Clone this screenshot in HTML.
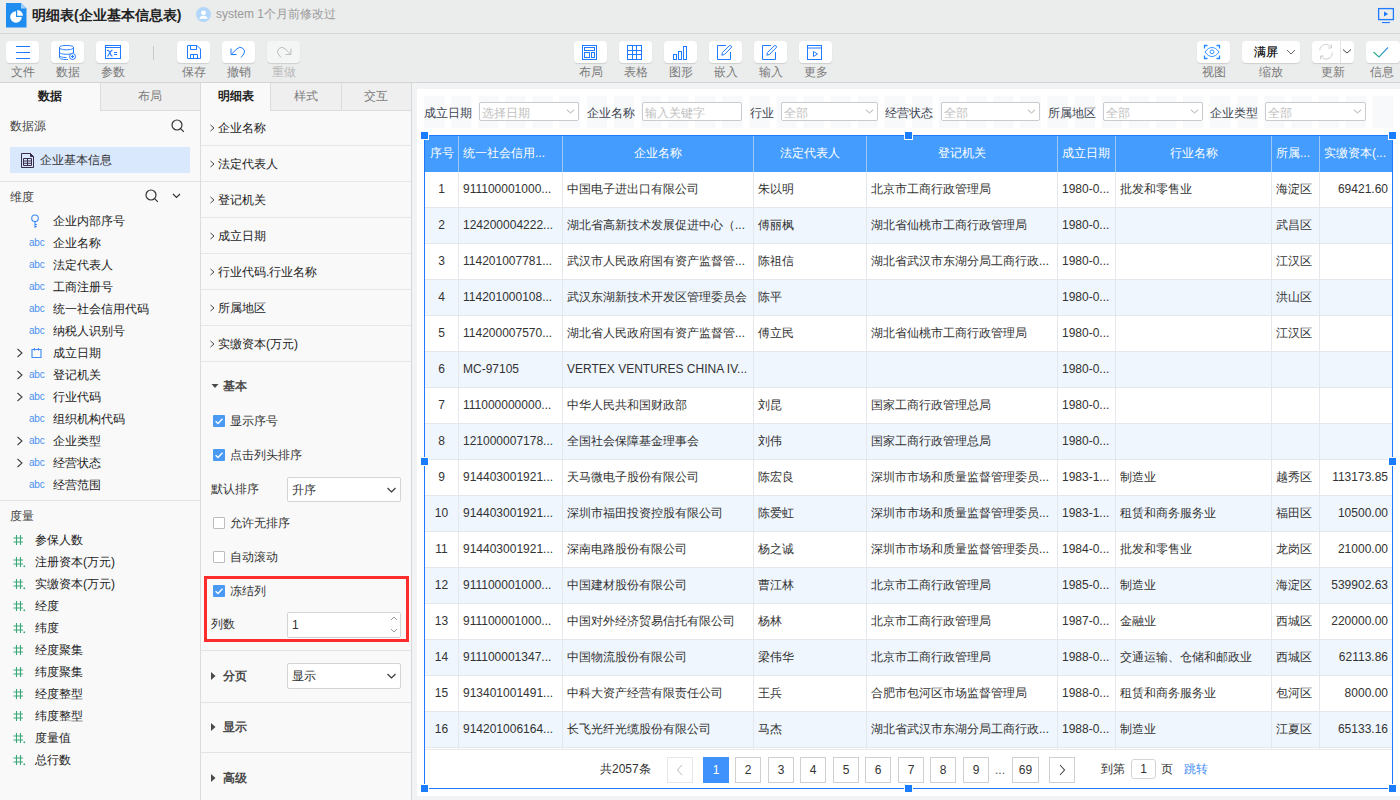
<!DOCTYPE html><html><head><meta charset="utf-8"><style>
*{box-sizing:border-box;margin:0;padding:0}
html,body{width:1400px;height:800px;overflow:hidden}
body{position:relative;font-family:"Liberation Sans",sans-serif;font-size:12px;color:#333;background:#ebecec}
.ab{position:absolute}
.t{position:absolute;white-space:nowrap;line-height:14px}
#hdr{left:0;top:0;width:1400px;height:34px;background:#ebecec;border-bottom:1px solid #d6d7d7}
#tb{left:0;top:34px;width:1400px;height:49px;background:#ebecec;border-bottom:1px solid #d3d4d4}
.btn{position:absolute;top:41px;width:33px;height:22px;background:#fff;border-radius:4px;box-shadow:0 1px 1px rgba(0,0,0,.13)}
.btn svg{position:absolute;left:0;top:0;overflow:visible}
.lbl{position:absolute;top:65px;width:60px;text-align:center;color:#7a7a7a;font-size:12px;line-height:14px}
#p1{left:0;top:83px;width:201px;height:717px;background:#f9f9f9;border-right:1px solid #dcdcdc}
#p2{left:201px;top:83px;width:211px;height:717px;background:#f9f9f9;border-right:1px solid #d8d8d8}
#main{left:412px;top:83px;width:988px;height:717px;background:#f2f3f4}
#card{left:417px;top:89px;width:983px;height:707px;background:#fff}
</style></head><body>
<div id="hdr" class="ab"></div>
<svg class="ab" style="left:6px;top:3px" width="21" height="25" viewBox="0 0 21 25">
<path d="M0 0H15L20.5 5.5V24.5H0Z" fill="#1f8cf0"/><path d="M15 0L20.5 5.5H15Z" fill="#9fd0ff"/>
<path d="M10 8.2A5.8 5.8 0 1 0 15.8 14H10Z" fill="#fff"/><path d="M11.2 7V12.8H17A5.8 5.8 0 0 0 11.2 7Z" fill="#fff"/>
</svg>
<div class="t" style="left:32px;top:7px;font-size:14px;font-weight:bold;color:#222;line-height:16px">明细表(企业基本信息表)</div>
<svg class="ab" style="left:196px;top:7px" width="15" height="15" viewBox="0 0 16 16">
<circle cx="8" cy="8" r="8" fill="#b3d7f8"/><circle cx="8" cy="6.2" r="2.6" fill="#fff"/><path d="M3.6 12.4C4.2 10 6 9.3 8 9.3S11.8 10 12.4 12.4Z" fill="#fff"/></svg>
<div class="t" style="left:216px;top:7px;color:#9a9a9a">system 1个月前修改过</div>
<svg class="ab" style="left:1377px;top:7px" width="18" height="17" viewBox="0 0 18 17">
<rect x="1.6" y="1.6" width="14.8" height="11" fill="none" stroke="#1f7bff" stroke-width="1.3"/>
<path d="M7 4.6L11.2 7.1L7 9.6Z" fill="#1f7bff"/><rect x="5" y="15" width="8" height="1.1" fill="#1f7bff"/></svg>
<div id="tb" class="ab"></div>
<div class="btn" style="left:6px;width:33px;background:#fff"><svg width="33" height="22" viewBox="0 0 33 22" fill="none" stroke="#1f7bff" stroke-width="1"><path d="M10 5.5H24M10 11.5H24M10 17.5H24"/></svg></div>
<div class="lbl" style="left:-7.5px;color:#7a7a7a">文件</div>
<div class="btn" style="left:51px;width:33px;background:#fff"><svg width="33" height="22" viewBox="0 0 33 22" fill="none" stroke="#1f7bff" stroke-width="1"><path d="M8.5 6.5C8.5 5 11.6 4.5 15.5 4.5S22.5 5 22.5 6.5V12"/><path d="M8.5 6.5V16.5C8.5 18 11.6 18.5 15.5 18.5H17"/><path d="M8.5 6.5C8.5 8 11.6 8.8 15.5 8.8S22.5 8 22.5 6.5"/><path d="M8.5 11C8.5 12.5 11.6 13.3 15.5 13.3S22.5 12.5 22.5 11"/><path d="M8.5 14.5C8.5 16 11.6 16.5 15.5 16.5"/><circle cx="21.5" cy="15.5" r="3" fill="#fff"/><path d="M21.5 14V17M20 15.5H23"/></svg></div>
<div class="lbl" style="left:37.5px;color:#7a7a7a">数据</div>
<div class="btn" style="left:96px;width:33px;background:#fff"><svg width="33" height="22" viewBox="0 0 33 22" fill="none" stroke="#1f7bff" stroke-width="1"><rect x="9.5" y="4.5" width="15" height="13"/><path d="M9.5 6.5H24.5"/><path d="M11 9.5C12.5 8.8 13 9.5 14 12S15.5 15.5 16.5 14.8M16.5 9C15 9.5 13 13 11.5 15.5" stroke-width="1.1"/><path d="M18 11.5H21M18 13.5H21"/></svg></div>
<div class="lbl" style="left:82.5px;color:#7a7a7a">参数</div>
<div class="ab" style="left:153px;top:46px;width:1px;height:14px;background:#c9c9c9"></div>
<div class="btn" style="left:177px;width:33px;background:#fff"><svg width="33" height="22" viewBox="0 0 33 22" fill="none" stroke="#1f7bff" stroke-width="1"><path d="M10.5 4.5H20L23.5 8V17.5H10.5Z"/><path d="M13.5 4.5V8.5H19.5V4.5"/><path d="M13.5 17.5V13.5H20.5V17.5M16.5 13.5V17.5"/></svg></div>
<div class="lbl" style="left:163.5px;color:#7a7a7a">保存</div>
<div class="btn" style="left:222px;width:33px;background:#fff"><svg width="33" height="22" viewBox="0 0 33 22" fill="none" stroke="#1f7bff" stroke-width="1"><path d="M9.5 13L15 7.8A4.3 4.3 0 0 1 21.8 13L19 16.5"/><path d="M9 7.5V13.5H14.5"/></svg></div>
<div class="lbl" style="left:208.5px;color:#7a7a7a">撤销</div>
<div class="btn" style="left:267px;width:33px;background:#f4f5f5"><svg width="33" height="22" viewBox="0 0 33 22" fill="none" stroke="#1f7bff" stroke-width="1"><path d="M23.5 13L18 7.8A4.3 4.3 0 0 0 11.2 13L14 16.5" stroke="#bdbdbd"/><path d="M24 7.5V13.5H18.5" stroke="#bdbdbd"/></svg></div>
<div class="lbl" style="left:253.5px;color:#b9b9b9">重做</div>
<div class="btn" style="left:574px;width:33px;background:#fff"><svg width="33" height="22" viewBox="0 0 33 22" fill="none" stroke="#1f7bff" stroke-width="1"><rect x="8.5" y="4.5" width="14" height="14"/><rect x="10.5" y="6.5" width="10" height="3"/><rect x="10.5" y="11.5" width="5" height="5"/><rect x="17.5" y="11.5" width="3" height="5"/></svg></div>
<div class="lbl" style="left:560.5px;color:#7a7a7a">布局</div>
<div class="btn" style="left:619px;width:33px;background:#fff"><svg width="33" height="22" viewBox="0 0 33 22" fill="none" stroke="#1f7bff" stroke-width="1"><rect x="8.5" y="4.5" width="14" height="14"/><path d="M8.5 9.5H22.5M8.5 13.5H22.5M13.5 4.5V18.5M17.5 4.5V18.5"/></svg></div>
<div class="lbl" style="left:605.5px;color:#7a7a7a">表格</div>
<div class="btn" style="left:664px;width:33px;background:#fff"><svg width="33" height="22" viewBox="0 0 33 22" fill="none" stroke="#1f7bff" stroke-width="1"><rect x="9.5" y="13.5" width="3" height="5"/><rect x="14.5" y="10.5" width="3" height="8"/><rect x="19.5" y="5.5" width="3" height="13"/></svg></div>
<div class="lbl" style="left:650.5px;color:#7a7a7a">图形</div>
<div class="btn" style="left:709px;width:33px;background:#fff"><svg width="33" height="22" viewBox="0 0 33 22" fill="none" stroke="#1f7bff" stroke-width="1"><path d="M17 4.5H8.5V18.5H21.5V11"/><path d="M12.8 14.2L13.5 11.6L20.2 4.9A1.3 1.3 0 0 1 22.1 6.8L15.4 13.5Z"/></svg></div>
<div class="lbl" style="left:695.5px;color:#7a7a7a">嵌入</div>
<div class="btn" style="left:754px;width:33px;background:#fff"><svg width="33" height="22" viewBox="0 0 33 22" fill="none" stroke="#1f7bff" stroke-width="1"><path d="M17 4.5H8.5V18.5H21.5V11"/><path d="M12.8 14.2L13.5 11.6L20.2 4.9A1.3 1.3 0 0 1 22.1 6.8L15.4 13.5Z"/></svg></div>
<div class="lbl" style="left:740.5px;color:#7a7a7a">输入</div>
<div class="btn" style="left:799px;width:33px;background:#fff"><svg width="33" height="22" viewBox="0 0 33 22" fill="none" stroke="#1f7bff" stroke-width="1"><rect x="8.5" y="4.5" width="14" height="14"/><path d="M8.5 7H22.5"/><path d="M14.5 10.5L18.5 13L14.5 15.5Z"/></svg></div>
<div class="lbl" style="left:785.5px;color:#7a7a7a">更多</div>
<div class="btn" style="left:1197px;width:33px;background:#fff"><svg width="33" height="22" viewBox="0 0 33 22" fill="none" stroke="#1f7bff" stroke-width="1"><path d="M7.5 7.5V4.5H10.5M19.5 4.5H22.5V7.5M22.5 14.5V17.5H19.5M10.5 17.5H7.5V14.5" stroke="#2288ff" stroke-width="1.3"/><path d="M8 11C10 8 12.5 6.5 15 6.5S20 8 22 11C20 14 17.5 15.5 15 15.5S10 14 8 11Z" stroke="#3595ff"/><circle cx="15" cy="10.8" r="1.9" stroke="#3595ff"/></svg></div>
<div class="lbl" style="left:1183.5px;color:#7a7a7a">视图</div>
<div class="btn" style="left:1242px;width:58px"><div class="t" style="left:12px;top:4px;color:#000;font-size:12px;-webkit-text-stroke:0.2px #000">满屏</div><svg width="58" height="22" viewBox="0 0 58 22" fill="none" stroke="#666" stroke-width="1"><path d="M45 9L49 13L53 9"/></svg></div>
<div class="lbl" style="left:1241px">缩放</div>
<div class="btn" style="left:1312px;width:42px"><svg width="42" height="22" viewBox="0 0 42 22" fill="none" stroke="#cfcfcf" stroke-width="1"><path d="M7.8 9.5A6 6 0 0 1 19 6.5M20.2 11.5A6 6 0 0 1 9 15"/><path d="M19.5 3.5V7H16M8.5 18.5V15H12"/><path d="M28.5 0V22" stroke="#e3e3e3"/><path d="M31 8.5L35 12L39 8.5" stroke="#444"/></svg></div>
<div class="lbl" style="left:1303px">更新</div>
<div class="btn" style="left:1366px;width:34px"><svg width="34" height="22" viewBox="0 0 34 22" fill="none" stroke-width="1.1"><defs><linearGradient id="g1" x1="0" x2="1"><stop offset="0" stop-color="#20b27a"/><stop offset="1" stop-color="#3a8ee6"/></linearGradient></defs><path d="M7.5 11L13 16L22 6.5" stroke="url(#g1)"/></svg></div>
<div class="lbl" style="left:1352px">信息</div>
<div id="p1" class="ab"></div>
<div id="p2" class="ab"></div>
<div id="main" class="ab"></div>
<div id="card" class="ab"></div>
<div class="ab" style="left:100px;top:83px;width:100px;height:28px;background:#efefef;border-left:1px solid #dcdcdc;border-bottom:1px solid #dcdcdc"></div>
<div class="t" style="left:38px;top:89px;font-weight:bold;color:#222">数据</div>
<div class="t" style="left:138px;top:89px;color:#7c7c7c">布局</div>
<div class="t" style="left:10px;top:119px;color:#444">数据源</div>
<svg class="ab" style="left:171px;top:119px" width="14" height="14" viewBox="0 0 14 14" fill="none" stroke="#333" stroke-width="1.2"><circle cx="6" cy="6" r="5"/><path d="M9.6 9.6L12.8 12.8"/></svg>
<div class="ab" style="left:10px;top:147px;width:180px;height:26px;background:#d9e8fc"></div>
<svg class="ab" style="left:21px;top:153px" width="14" height="16" viewBox="0 0 14 16" fill="none" stroke="#3b2d4d" stroke-width="1"><path d="M0.5 0.5H9.5L12.5 3.5V14.5H0.5Z"/><path d="M9.5 0.5L12.5 3.5H9.5Z" fill="#3b2d4d"/><path d="M2.5 5.5H10.5V12.5H2.5ZM2.5 8H10.5M2.5 10.3H10.5M6.5 5.5V12.5"/></svg>
<div class="t" style="left:40px;top:153px;color:#333">企业基本信息</div>
<div class="ab" style="left:0;top:181px;width:200px;height:1px;background:#e3e3e3"></div>
<div class="t" style="left:10px;top:190px;color:#444">维度</div>
<svg class="ab" style="left:145px;top:189px" width="14" height="14" viewBox="0 0 14 14" fill="none" stroke="#333" stroke-width="1.2"><circle cx="6" cy="6" r="5"/><path d="M9.6 9.6L12.8 12.8"/></svg>
<svg class="ab" style="left:171px;top:192px" width="12" height="8" viewBox="0 0 12 8" fill="none" stroke="#333" stroke-width="1.2"><path d="M2 2L5.5 5.5L9 2"/></svg>
<svg class="ab" style="left:30px;top:213.5px" width="10" height="15" viewBox="0 0 10 15" fill="none" stroke="#3d8cf5" stroke-width="1.1"><circle cx="5" cy="4.3" r="3.3"/><path d="M5 7.6V14M5 10.5H7M5 12.5H6.8"/></svg>
<div class="t" style="left:53px;top:213.5px;color:#222">企业内部序号</div>
<div class="t" style="left:29px;top:235.5px;font-size:10px;color:#4a90f0;letter-spacing:-0.2px">abc</div>
<div class="t" style="left:53px;top:235.5px;color:#222">企业名称</div>
<div class="t" style="left:29px;top:257.5px;font-size:10px;color:#4a90f0;letter-spacing:-0.2px">abc</div>
<div class="t" style="left:53px;top:257.5px;color:#222">法定代表人</div>
<div class="t" style="left:29px;top:279.5px;font-size:10px;color:#4a90f0;letter-spacing:-0.2px">abc</div>
<div class="t" style="left:53px;top:279.5px;color:#222">工商注册号</div>
<div class="t" style="left:29px;top:301.5px;font-size:10px;color:#4a90f0;letter-spacing:-0.2px">abc</div>
<div class="t" style="left:53px;top:301.5px;color:#222">统一社会信用代码</div>
<div class="t" style="left:29px;top:323.5px;font-size:10px;color:#4a90f0;letter-spacing:-0.2px">abc</div>
<div class="t" style="left:53px;top:323.5px;color:#222">纳税人识别号</div>
<svg class="ab" style="left:16px;top:347.5px" width="8" height="10" viewBox="0 0 8 10" fill="none" stroke="#444" stroke-width="1.1"><path d="M1.5 1L6 5L1.5 9"/></svg>
<svg class="ab" style="left:31px;top:346.5px" width="11" height="12" viewBox="0 0 11 12" fill="none" stroke="#3d8cf5" stroke-width="1.1"><path d="M1 2.5H10V10.5H1Z"/><path d="M3.5 1V3.5M7.5 1V3.5"/></svg>
<div class="t" style="left:53px;top:345.5px;color:#222">成立日期</div>
<svg class="ab" style="left:16px;top:369.5px" width="8" height="10" viewBox="0 0 8 10" fill="none" stroke="#444" stroke-width="1.1"><path d="M1.5 1L6 5L1.5 9"/></svg>
<div class="t" style="left:29px;top:367.5px;font-size:10px;color:#4a90f0;letter-spacing:-0.2px">abc</div>
<div class="t" style="left:53px;top:367.5px;color:#222">登记机关</div>
<svg class="ab" style="left:16px;top:391.5px" width="8" height="10" viewBox="0 0 8 10" fill="none" stroke="#444" stroke-width="1.1"><path d="M1.5 1L6 5L1.5 9"/></svg>
<div class="t" style="left:29px;top:389.5px;font-size:10px;color:#4a90f0;letter-spacing:-0.2px">abc</div>
<div class="t" style="left:53px;top:389.5px;color:#222">行业代码</div>
<div class="t" style="left:29px;top:411.5px;font-size:10px;color:#4a90f0;letter-spacing:-0.2px">abc</div>
<div class="t" style="left:53px;top:411.5px;color:#222">组织机构代码</div>
<svg class="ab" style="left:16px;top:435.5px" width="8" height="10" viewBox="0 0 8 10" fill="none" stroke="#444" stroke-width="1.1"><path d="M1.5 1L6 5L1.5 9"/></svg>
<div class="t" style="left:29px;top:433.5px;font-size:10px;color:#4a90f0;letter-spacing:-0.2px">abc</div>
<div class="t" style="left:53px;top:433.5px;color:#222">企业类型</div>
<svg class="ab" style="left:16px;top:457.5px" width="8" height="10" viewBox="0 0 8 10" fill="none" stroke="#444" stroke-width="1.1"><path d="M1.5 1L6 5L1.5 9"/></svg>
<div class="t" style="left:29px;top:455.5px;font-size:10px;color:#4a90f0;letter-spacing:-0.2px">abc</div>
<div class="t" style="left:53px;top:455.5px;color:#222">经营状态</div>
<div class="t" style="left:29px;top:477.5px;font-size:10px;color:#4a90f0;letter-spacing:-0.2px">abc</div>
<div class="t" style="left:53px;top:477.5px;color:#222">经营范围</div>
<div class="ab" style="left:0;top:500px;width:200px;height:1px;background:#e3e3e3"></div>
<div class="t" style="left:10px;top:509px;color:#444">度量</div>
<svg class="ab" style="left:12px;top:534px" width="14" height="12" viewBox="0 0 14 12" fill="none" stroke="#3aa876" stroke-width="1.1"><path d="M4.5 1V11M8.5 1V11M1.5 4H11M1.5 8H11"/></svg>
<div class="t" style="left:35px;top:533px;color:#222">参保人数</div>
<svg class="ab" style="left:12px;top:556px" width="14" height="12" viewBox="0 0 14 12" fill="none" stroke="#3aa876" stroke-width="1.1"><path d="M4.5 1V11M8.5 1V11M1.5 4H11M1.5 8H11"/><rect x="11.5" y="9.5" width="1.6" height="1.6" fill="#3aa876" stroke="none"/></svg>
<div class="t" style="left:35px;top:555px;color:#222">注册资本(万元)</div>
<svg class="ab" style="left:12px;top:578px" width="14" height="12" viewBox="0 0 14 12" fill="none" stroke="#3aa876" stroke-width="1.1"><path d="M4.5 1V11M8.5 1V11M1.5 4H11M1.5 8H11"/><rect x="11.5" y="9.5" width="1.6" height="1.6" fill="#3aa876" stroke="none"/></svg>
<div class="t" style="left:35px;top:577px;color:#222">实缴资本(万元)</div>
<svg class="ab" style="left:12px;top:600px" width="14" height="12" viewBox="0 0 14 12" fill="none" stroke="#3aa876" stroke-width="1.1"><path d="M4.5 1V11M8.5 1V11M1.5 4H11M1.5 8H11"/><rect x="11.5" y="9.5" width="1.6" height="1.6" fill="#3aa876" stroke="none"/></svg>
<div class="t" style="left:35px;top:599px;color:#222">经度</div>
<svg class="ab" style="left:12px;top:622px" width="14" height="12" viewBox="0 0 14 12" fill="none" stroke="#3aa876" stroke-width="1.1"><path d="M4.5 1V11M8.5 1V11M1.5 4H11M1.5 8H11"/><rect x="11.5" y="9.5" width="1.6" height="1.6" fill="#3aa876" stroke="none"/></svg>
<div class="t" style="left:35px;top:621px;color:#222">纬度</div>
<svg class="ab" style="left:12px;top:644px" width="14" height="12" viewBox="0 0 14 12" fill="none" stroke="#3aa876" stroke-width="1.1"><path d="M4.5 1V11M8.5 1V11M1.5 4H11M1.5 8H11"/></svg>
<div class="t" style="left:35px;top:643px;color:#222">经度聚集</div>
<svg class="ab" style="left:12px;top:666px" width="14" height="12" viewBox="0 0 14 12" fill="none" stroke="#3aa876" stroke-width="1.1"><path d="M4.5 1V11M8.5 1V11M1.5 4H11M1.5 8H11"/></svg>
<div class="t" style="left:35px;top:665px;color:#222">纬度聚集</div>
<svg class="ab" style="left:12px;top:688px" width="14" height="12" viewBox="0 0 14 12" fill="none" stroke="#3aa876" stroke-width="1.1"><path d="M4.5 1V11M8.5 1V11M1.5 4H11M1.5 8H11"/></svg>
<div class="t" style="left:35px;top:687px;color:#222">经度整型</div>
<svg class="ab" style="left:12px;top:710px" width="14" height="12" viewBox="0 0 14 12" fill="none" stroke="#3aa876" stroke-width="1.1"><path d="M4.5 1V11M8.5 1V11M1.5 4H11M1.5 8H11"/></svg>
<div class="t" style="left:35px;top:709px;color:#222">纬度整型</div>
<svg class="ab" style="left:12px;top:732px" width="14" height="12" viewBox="0 0 14 12" fill="none" stroke="#3aa876" stroke-width="1.1"><path d="M4.5 1V11M8.5 1V11M1.5 4H11M1.5 8H11"/><rect x="11.5" y="9.5" width="1.6" height="1.6" fill="#3aa876" stroke="none"/></svg>
<div class="t" style="left:35px;top:731px;color:#222">度量值</div>
<svg class="ab" style="left:12px;top:754px" width="14" height="12" viewBox="0 0 14 12" fill="none" stroke="#3aa876" stroke-width="1.1"><path d="M4.5 1V11M8.5 1V11M1.5 4H11M1.5 8H11"/><rect x="11.5" y="9.5" width="1.6" height="1.6" fill="#3aa876" stroke="none"/></svg>
<div class="t" style="left:35px;top:753px;color:#222">总行数</div>
<div class="ab" style="left:270px;top:83px;width:141px;height:28px;background:#efefef;border-left:1px solid #dcdcdc;border-bottom:1px solid #dcdcdc"></div>
<div class="ab" style="left:341px;top:83px;width:1px;height:27px;background:#dcdcdc"></div>
<div class="t" style="left:218px;top:89px;font-weight:bold;color:#222">明细表</div>
<div class="t" style="left:294px;top:89px;color:#7c7c7c">样式</div>
<div class="t" style="left:364px;top:89px;color:#7c7c7c">交互</div>
<svg class="ab" style="left:209px;top:123px" width="7" height="10" viewBox="0 0 7 10" fill="none" stroke="#444" stroke-width="1"><path d="M1.5 2L5 5L1.5 8"/></svg>
<div class="t" style="left:218px;top:121px;color:#222">企业名称</div>
<div class="ab" style="left:201px;top:145px;width:210px;height:1px;background:#e6e6e6"></div>
<svg class="ab" style="left:209px;top:159px" width="7" height="10" viewBox="0 0 7 10" fill="none" stroke="#444" stroke-width="1"><path d="M1.5 2L5 5L1.5 8"/></svg>
<div class="t" style="left:218px;top:157px;color:#222">法定代表人</div>
<div class="ab" style="left:201px;top:181px;width:210px;height:1px;background:#e6e6e6"></div>
<svg class="ab" style="left:209px;top:195px" width="7" height="10" viewBox="0 0 7 10" fill="none" stroke="#444" stroke-width="1"><path d="M1.5 2L5 5L1.5 8"/></svg>
<div class="t" style="left:218px;top:193px;color:#222">登记机关</div>
<div class="ab" style="left:201px;top:217px;width:210px;height:1px;background:#e6e6e6"></div>
<svg class="ab" style="left:209px;top:231px" width="7" height="10" viewBox="0 0 7 10" fill="none" stroke="#444" stroke-width="1"><path d="M1.5 2L5 5L1.5 8"/></svg>
<div class="t" style="left:218px;top:229px;color:#222">成立日期</div>
<div class="ab" style="left:201px;top:253px;width:210px;height:1px;background:#e6e6e6"></div>
<svg class="ab" style="left:209px;top:267px" width="7" height="10" viewBox="0 0 7 10" fill="none" stroke="#444" stroke-width="1"><path d="M1.5 2L5 5L1.5 8"/></svg>
<div class="t" style="left:218px;top:265px;color:#222">行业代码.行业名称</div>
<div class="ab" style="left:201px;top:289px;width:210px;height:1px;background:#e6e6e6"></div>
<svg class="ab" style="left:209px;top:303px" width="7" height="10" viewBox="0 0 7 10" fill="none" stroke="#444" stroke-width="1"><path d="M1.5 2L5 5L1.5 8"/></svg>
<div class="t" style="left:218px;top:301px;color:#222">所属地区</div>
<div class="ab" style="left:201px;top:325px;width:210px;height:1px;background:#e6e6e6"></div>
<svg class="ab" style="left:209px;top:339px" width="7" height="10" viewBox="0 0 7 10" fill="none" stroke="#444" stroke-width="1"><path d="M1.5 2L5 5L1.5 8"/></svg>
<div class="t" style="left:218px;top:337px;color:#222">实缴资本(万元)</div>
<div class="ab" style="left:201px;top:361px;width:210px;height:1px;background:#e6e6e6"></div>
<svg class="ab" style="left:211px;top:383px" width="8" height="6" viewBox="0 0 8 6"><path d="M0.5 1H7.5L4 5Z" fill="#4a4a4a"/></svg>
<div class="t" style="left:223px;top:379px;color:#4a4a4a;font-weight:bold">基本</div>
<svg class="ab" style="left:213px;top:415px" width="12" height="12" viewBox="0 0 12 12"><rect width="12" height="12" rx="1" fill="#4a9af4"/><path d="M2.6 6.2L5 8.5L9.5 3.8" fill="none" stroke="#fff" stroke-width="1.3"/></svg>
<div class="t" style="left:230px;top:414px;color:#333">显示序号</div>
<svg class="ab" style="left:213px;top:449px" width="12" height="12" viewBox="0 0 12 12"><rect width="12" height="12" rx="1" fill="#4a9af4"/><path d="M2.6 6.2L5 8.5L9.5 3.8" fill="none" stroke="#fff" stroke-width="1.3"/></svg>
<div class="t" style="left:230px;top:448px;color:#333">点击列头排序</div>
<div class="t" style="left:211px;top:482px;color:#333">默认排序</div>
<div class="ab" style="left:287px;top:477px;width:114px;height:25px;background:#fff;border:1px solid #d4d4d4;border-radius:2px"></div>
<div class="t" style="left:292px;top:482.5px;color:#333">升序</div>
<svg class="ab" style="left:386px;top:485.5px" width="12" height="8" viewBox="0 0 12 8" fill="none" stroke="#333" stroke-width="1.1"><path d="M1.5 2L5.5 6L9.5 2"/></svg>
<div class="ab" style="left:213px;top:517px;width:12px;height:12px;background:#fff;border:1px solid #bdbdbd;border-radius:1px"></div>
<div class="t" style="left:230px;top:516px;color:#333">允许无排序</div>
<div class="ab" style="left:213px;top:551px;width:12px;height:12px;background:#fff;border:1px solid #bdbdbd;border-radius:1px"></div>
<div class="t" style="left:230px;top:550px;color:#333">自动滚动</div>
<div class="ab" style="left:204px;top:576px;width:205px;height:66px;border:3px solid #fd2d2d"></div>
<svg class="ab" style="left:213px;top:585px" width="12" height="12" viewBox="0 0 12 12"><rect width="12" height="12" rx="1" fill="#4a9af4"/><path d="M2.6 6.2L5 8.5L9.5 3.8" fill="none" stroke="#fff" stroke-width="1.3"/></svg>
<div class="t" style="left:230px;top:584px;color:#333">冻结列</div>
<div class="t" style="left:211px;top:617px;color:#333">列数</div>
<div class="ab" style="left:287px;top:612px;width:114px;height:26px;background:#fff;border:1px solid #d4d4d4;border-radius:2px"></div>
<div class="t" style="left:292px;top:618px;color:#333">1</div>
<svg class="ab" style="left:389px;top:613px" width="10" height="22" viewBox="0 0 10 22" fill="none" stroke="#999" stroke-width="1"><path d="M2 7L5 4L8 7M2 16L5 19L8 16"/></svg>
<div class="ab" style="left:201px;top:650px;width:210px;height:1px;background:#e3e3e3"></div>
<svg class="ab" style="left:210px;top:671px" width="6" height="10" viewBox="0 0 6 10"><path d="M1 1V9L5.5 5Z" fill="#4a4a4a"/></svg>
<div class="t" style="left:223px;top:669px;color:#4a4a4a;font-weight:bold">分页</div>
<div class="ab" style="left:287px;top:663px;width:114px;height:26px;background:#fff;border:1px solid #d4d4d4;border-radius:2px"></div>
<div class="t" style="left:292px;top:669.0px;color:#333">显示</div>
<svg class="ab" style="left:386px;top:672.0px" width="12" height="8" viewBox="0 0 12 8" fill="none" stroke="#333" stroke-width="1.1"><path d="M1.5 2L5.5 6L9.5 2"/></svg>
<div class="ab" style="left:201px;top:702px;width:210px;height:1px;background:#e3e3e3"></div>
<svg class="ab" style="left:210px;top:722px" width="6" height="10" viewBox="0 0 6 10"><path d="M1 1V9L5.5 5Z" fill="#4a4a4a"/></svg>
<div class="t" style="left:223px;top:720px;color:#4a4a4a;font-weight:bold">显示</div>
<div class="ab" style="left:201px;top:752px;width:210px;height:1px;background:#e3e3e3"></div>
<svg class="ab" style="left:210px;top:773px" width="6" height="10" viewBox="0 0 6 10"><path d="M1 1V9L5.5 5Z" fill="#4a4a4a"/></svg>
<div class="t" style="left:223px;top:771px;color:#4a4a4a;font-weight:bold">高级</div>
<div class="ab" style="left:424px;top:96px;width:969px;height:32px;background:linear-gradient(90deg,#f8f9fb 0,#f8f9fb 20px,transparent 20px);background-size:27.114px 32px"></div>
<div class="t" style="left:424px;top:106px;color:#3d4450">成立日期</div>
<div class="ab" style="left:479px;top:102px;width:100px;height:19px;background:#fff;border:1px solid #c8cbd0;border-radius:2px"></div>
<div class="t" style="left:482px;top:106px;color:#c0c0c0">选择日期</div>
<svg class="ab" style="left:566px;top:109px" width="9" height="5" viewBox="0 0 9 5" fill="none" stroke="#a8a8a8" stroke-width="1"><path d="M1 0.8L4.5 4L8 0.8"/></svg>
<div class="t" style="left:587px;top:106px;color:#3d4450">企业名称</div>
<div class="ab" style="left:642px;top:102px;width:100px;height:19px;background:#fff;border:1px solid #c8cbd0;border-radius:2px"></div>
<div class="t" style="left:645px;top:106px;color:#c0c0c0">输入关键字</div>
<div class="t" style="left:750px;top:106px;color:#3d4450">行业</div>
<div class="ab" style="left:781px;top:102px;width:97px;height:19px;background:#fff;border:1px solid #c8cbd0;border-radius:2px"></div>
<div class="t" style="left:784px;top:106px;color:#c0c0c0">全部</div>
<svg class="ab" style="left:865px;top:109px" width="9" height="5" viewBox="0 0 9 5" fill="none" stroke="#a8a8a8" stroke-width="1"><path d="M1 0.8L4.5 4L8 0.8"/></svg>
<div class="t" style="left:885px;top:106px;color:#3d4450">经营状态</div>
<div class="ab" style="left:941px;top:102px;width:99px;height:19px;background:#fff;border:1px solid #c8cbd0;border-radius:2px"></div>
<div class="t" style="left:944px;top:106px;color:#c0c0c0">全部</div>
<svg class="ab" style="left:1027px;top:109px" width="9" height="5" viewBox="0 0 9 5" fill="none" stroke="#a8a8a8" stroke-width="1"><path d="M1 0.8L4.5 4L8 0.8"/></svg>
<div class="t" style="left:1048px;top:106px;color:#3d4450">所属地区</div>
<div class="ab" style="left:1103px;top:102px;width:100px;height:19px;background:#fff;border:1px solid #c8cbd0;border-radius:2px"></div>
<div class="t" style="left:1106px;top:106px;color:#c0c0c0">全部</div>
<svg class="ab" style="left:1190px;top:109px" width="9" height="5" viewBox="0 0 9 5" fill="none" stroke="#a8a8a8" stroke-width="1"><path d="M1 0.8L4.5 4L8 0.8"/></svg>
<div class="t" style="left:1210px;top:106px;color:#3d4450">企业类型</div>
<div class="ab" style="left:1265px;top:102px;width:101px;height:19px;background:#fff;border:1px solid #c8cbd0;border-radius:2px"></div>
<div class="t" style="left:1268px;top:106px;color:#c0c0c0">全部</div>
<svg class="ab" style="left:1353px;top:109px" width="9" height="5" viewBox="0 0 9 5" fill="none" stroke="#a8a8a8" stroke-width="1"><path d="M1 0.8L4.5 4L8 0.8"/></svg>
<div class="ab" style="left:425px;top:136px;width:967px;height:36px;background:#439cfe"></div>
<div class="ab" style="left:458px;top:136px;width:1px;height:36px;background:#9cc8f8"></div>
<div class="ab" style="left:562px;top:136px;width:1px;height:36px;background:#9cc8f8"></div>
<div class="ab" style="left:753px;top:136px;width:1px;height:36px;background:#9cc8f8"></div>
<div class="ab" style="left:866px;top:136px;width:1px;height:36px;background:#9cc8f8"></div>
<div class="ab" style="left:1057px;top:136px;width:1px;height:36px;background:#9cc8f8"></div>
<div class="ab" style="left:1115px;top:136px;width:1px;height:36px;background:#9cc8f8"></div>
<div class="ab" style="left:1271px;top:136px;width:1px;height:36px;background:#9cc8f8"></div>
<div class="ab" style="left:1319px;top:136px;width:1px;height:36px;background:#9cc8f8"></div>
<div class="t" style="left:425px;top:146px;width:33px;text-align:center;color:#fff">序号</div>
<div class="t" style="left:463px;top:146px;color:#fff">统一社会信用...</div>
<div class="t" style="left:563px;top:146px;width:190px;text-align:center;color:#fff">企业名称</div>
<div class="t" style="left:754px;top:146px;width:112px;text-align:center;color:#fff">法定代表人</div>
<div class="t" style="left:867px;top:146px;width:190px;text-align:center;color:#fff">登记机关</div>
<div class="t" style="left:1062px;top:146px;color:#fff">成立日期</div>
<div class="t" style="left:1116px;top:146px;width:155px;text-align:center;color:#fff">行业名称</div>
<div class="t" style="left:1276px;top:146px;color:#fff">所属...</div>
<div class="t" style="left:1324px;top:146px;color:#fff">实缴资本(...</div>
<div class="ab" style="left:425px;top:172px;width:967px;height:36px;background:#ffffff;border-bottom:1px solid #e4e7eb"></div>
<div class="ab" style="left:458px;top:172px;width:1px;height:36px;background:#e4e7eb"></div>
<div class="ab" style="left:562px;top:172px;width:1px;height:36px;background:#e4e7eb"></div>
<div class="ab" style="left:753px;top:172px;width:1px;height:36px;background:#e4e7eb"></div>
<div class="ab" style="left:866px;top:172px;width:1px;height:36px;background:#e4e7eb"></div>
<div class="ab" style="left:1057px;top:172px;width:1px;height:36px;background:#e4e7eb"></div>
<div class="ab" style="left:1115px;top:172px;width:1px;height:36px;background:#e4e7eb"></div>
<div class="ab" style="left:1271px;top:172px;width:1px;height:36px;background:#e4e7eb"></div>
<div class="ab" style="left:1319px;top:172px;width:1px;height:36px;background:#e4e7eb"></div>
<div class="t" style="left:425px;top:182px;width:33px;text-align:center">1</div>
<div class="t" style="left:463px;top:182px">911100001000...</div>
<div class="t" style="left:567px;top:182px">中国电子进出口有限公司</div>
<div class="t" style="left:758px;top:182px">朱以明</div>
<div class="t" style="left:871px;top:182px">北京市工商行政管理局</div>
<div class="t" style="left:1062px;top:182px">1980-0...</div>
<div class="t" style="left:1120px;top:182px">批发和零售业</div>
<div class="t" style="left:1276px;top:182px">海淀区</div>
<div class="t" style="left:1319px;top:182px;width:69px;text-align:right">69421.60</div>
<div class="ab" style="left:425px;top:208px;width:967px;height:36px;background:#eff6fe;border-bottom:1px solid #e4e7eb"></div>
<div class="ab" style="left:458px;top:208px;width:1px;height:36px;background:#e4e7eb"></div>
<div class="ab" style="left:562px;top:208px;width:1px;height:36px;background:#e4e7eb"></div>
<div class="ab" style="left:753px;top:208px;width:1px;height:36px;background:#e4e7eb"></div>
<div class="ab" style="left:866px;top:208px;width:1px;height:36px;background:#e4e7eb"></div>
<div class="ab" style="left:1057px;top:208px;width:1px;height:36px;background:#e4e7eb"></div>
<div class="ab" style="left:1115px;top:208px;width:1px;height:36px;background:#e4e7eb"></div>
<div class="ab" style="left:1271px;top:208px;width:1px;height:36px;background:#e4e7eb"></div>
<div class="ab" style="left:1319px;top:208px;width:1px;height:36px;background:#e4e7eb"></div>
<div class="t" style="left:425px;top:218px;width:33px;text-align:center">2</div>
<div class="t" style="left:463px;top:218px">124200004222...</div>
<div class="t" style="left:567px;top:218px">湖北省高新技术发展促进中心（...</div>
<div class="t" style="left:758px;top:218px">傅丽枫</div>
<div class="t" style="left:871px;top:218px">湖北省仙桃市工商行政管理局</div>
<div class="t" style="left:1062px;top:218px">1980-0...</div>
<div class="t" style="left:1276px;top:218px">武昌区</div>
<div class="ab" style="left:425px;top:244px;width:967px;height:36px;background:#ffffff;border-bottom:1px solid #e4e7eb"></div>
<div class="ab" style="left:458px;top:244px;width:1px;height:36px;background:#e4e7eb"></div>
<div class="ab" style="left:562px;top:244px;width:1px;height:36px;background:#e4e7eb"></div>
<div class="ab" style="left:753px;top:244px;width:1px;height:36px;background:#e4e7eb"></div>
<div class="ab" style="left:866px;top:244px;width:1px;height:36px;background:#e4e7eb"></div>
<div class="ab" style="left:1057px;top:244px;width:1px;height:36px;background:#e4e7eb"></div>
<div class="ab" style="left:1115px;top:244px;width:1px;height:36px;background:#e4e7eb"></div>
<div class="ab" style="left:1271px;top:244px;width:1px;height:36px;background:#e4e7eb"></div>
<div class="ab" style="left:1319px;top:244px;width:1px;height:36px;background:#e4e7eb"></div>
<div class="t" style="left:425px;top:254px;width:33px;text-align:center">3</div>
<div class="t" style="left:463px;top:254px">114201007781...</div>
<div class="t" style="left:567px;top:254px">武汉市人民政府国有资产监督管...</div>
<div class="t" style="left:758px;top:254px">陈祖信</div>
<div class="t" style="left:871px;top:254px">湖北省武汉市东湖分局工商行政...</div>
<div class="t" style="left:1062px;top:254px">1980-0...</div>
<div class="t" style="left:1276px;top:254px">江汉区</div>
<div class="ab" style="left:425px;top:280px;width:967px;height:36px;background:#eff6fe;border-bottom:1px solid #e4e7eb"></div>
<div class="ab" style="left:458px;top:280px;width:1px;height:36px;background:#e4e7eb"></div>
<div class="ab" style="left:562px;top:280px;width:1px;height:36px;background:#e4e7eb"></div>
<div class="ab" style="left:753px;top:280px;width:1px;height:36px;background:#e4e7eb"></div>
<div class="ab" style="left:866px;top:280px;width:1px;height:36px;background:#e4e7eb"></div>
<div class="ab" style="left:1057px;top:280px;width:1px;height:36px;background:#e4e7eb"></div>
<div class="ab" style="left:1115px;top:280px;width:1px;height:36px;background:#e4e7eb"></div>
<div class="ab" style="left:1271px;top:280px;width:1px;height:36px;background:#e4e7eb"></div>
<div class="ab" style="left:1319px;top:280px;width:1px;height:36px;background:#e4e7eb"></div>
<div class="t" style="left:425px;top:290px;width:33px;text-align:center">4</div>
<div class="t" style="left:463px;top:290px">114201000108...</div>
<div class="t" style="left:567px;top:290px">武汉东湖新技术开发区管理委员会</div>
<div class="t" style="left:758px;top:290px">陈平</div>
<div class="t" style="left:1062px;top:290px">1980-0...</div>
<div class="t" style="left:1276px;top:290px">洪山区</div>
<div class="ab" style="left:425px;top:316px;width:967px;height:36px;background:#ffffff;border-bottom:1px solid #e4e7eb"></div>
<div class="ab" style="left:458px;top:316px;width:1px;height:36px;background:#e4e7eb"></div>
<div class="ab" style="left:562px;top:316px;width:1px;height:36px;background:#e4e7eb"></div>
<div class="ab" style="left:753px;top:316px;width:1px;height:36px;background:#e4e7eb"></div>
<div class="ab" style="left:866px;top:316px;width:1px;height:36px;background:#e4e7eb"></div>
<div class="ab" style="left:1057px;top:316px;width:1px;height:36px;background:#e4e7eb"></div>
<div class="ab" style="left:1115px;top:316px;width:1px;height:36px;background:#e4e7eb"></div>
<div class="ab" style="left:1271px;top:316px;width:1px;height:36px;background:#e4e7eb"></div>
<div class="ab" style="left:1319px;top:316px;width:1px;height:36px;background:#e4e7eb"></div>
<div class="t" style="left:425px;top:326px;width:33px;text-align:center">5</div>
<div class="t" style="left:463px;top:326px">114200007570...</div>
<div class="t" style="left:567px;top:326px">湖北省人民政府国有资产监督管...</div>
<div class="t" style="left:758px;top:326px">傅立民</div>
<div class="t" style="left:871px;top:326px">湖北省仙桃市工商行政管理局</div>
<div class="t" style="left:1062px;top:326px">1980-0...</div>
<div class="t" style="left:1276px;top:326px">江汉区</div>
<div class="ab" style="left:425px;top:352px;width:967px;height:36px;background:#eff6fe;border-bottom:1px solid #e4e7eb"></div>
<div class="ab" style="left:458px;top:352px;width:1px;height:36px;background:#e4e7eb"></div>
<div class="ab" style="left:562px;top:352px;width:1px;height:36px;background:#e4e7eb"></div>
<div class="ab" style="left:753px;top:352px;width:1px;height:36px;background:#e4e7eb"></div>
<div class="ab" style="left:866px;top:352px;width:1px;height:36px;background:#e4e7eb"></div>
<div class="ab" style="left:1057px;top:352px;width:1px;height:36px;background:#e4e7eb"></div>
<div class="ab" style="left:1115px;top:352px;width:1px;height:36px;background:#e4e7eb"></div>
<div class="ab" style="left:1271px;top:352px;width:1px;height:36px;background:#e4e7eb"></div>
<div class="ab" style="left:1319px;top:352px;width:1px;height:36px;background:#e4e7eb"></div>
<div class="t" style="left:425px;top:362px;width:33px;text-align:center">6</div>
<div class="t" style="left:463px;top:362px">MC-97105</div>
<div class="t" style="left:567px;top:362px">VERTEX VENTURES CHINA IV...</div>
<div class="t" style="left:1062px;top:362px">1980-0...</div>
<div class="ab" style="left:425px;top:388px;width:967px;height:36px;background:#ffffff;border-bottom:1px solid #e4e7eb"></div>
<div class="ab" style="left:458px;top:388px;width:1px;height:36px;background:#e4e7eb"></div>
<div class="ab" style="left:562px;top:388px;width:1px;height:36px;background:#e4e7eb"></div>
<div class="ab" style="left:753px;top:388px;width:1px;height:36px;background:#e4e7eb"></div>
<div class="ab" style="left:866px;top:388px;width:1px;height:36px;background:#e4e7eb"></div>
<div class="ab" style="left:1057px;top:388px;width:1px;height:36px;background:#e4e7eb"></div>
<div class="ab" style="left:1115px;top:388px;width:1px;height:36px;background:#e4e7eb"></div>
<div class="ab" style="left:1271px;top:388px;width:1px;height:36px;background:#e4e7eb"></div>
<div class="ab" style="left:1319px;top:388px;width:1px;height:36px;background:#e4e7eb"></div>
<div class="t" style="left:425px;top:398px;width:33px;text-align:center">7</div>
<div class="t" style="left:463px;top:398px">111000000000...</div>
<div class="t" style="left:567px;top:398px">中华人民共和国财政部</div>
<div class="t" style="left:758px;top:398px">刘昆</div>
<div class="t" style="left:871px;top:398px">国家工商行政管理总局</div>
<div class="t" style="left:1062px;top:398px">1980-0...</div>
<div class="ab" style="left:425px;top:424px;width:967px;height:36px;background:#eff6fe;border-bottom:1px solid #e4e7eb"></div>
<div class="ab" style="left:458px;top:424px;width:1px;height:36px;background:#e4e7eb"></div>
<div class="ab" style="left:562px;top:424px;width:1px;height:36px;background:#e4e7eb"></div>
<div class="ab" style="left:753px;top:424px;width:1px;height:36px;background:#e4e7eb"></div>
<div class="ab" style="left:866px;top:424px;width:1px;height:36px;background:#e4e7eb"></div>
<div class="ab" style="left:1057px;top:424px;width:1px;height:36px;background:#e4e7eb"></div>
<div class="ab" style="left:1115px;top:424px;width:1px;height:36px;background:#e4e7eb"></div>
<div class="ab" style="left:1271px;top:424px;width:1px;height:36px;background:#e4e7eb"></div>
<div class="ab" style="left:1319px;top:424px;width:1px;height:36px;background:#e4e7eb"></div>
<div class="t" style="left:425px;top:434px;width:33px;text-align:center">8</div>
<div class="t" style="left:463px;top:434px">121000007178...</div>
<div class="t" style="left:567px;top:434px">全国社会保障基金理事会</div>
<div class="t" style="left:758px;top:434px">刘伟</div>
<div class="t" style="left:871px;top:434px">国家工商行政管理总局</div>
<div class="t" style="left:1062px;top:434px">1980-0...</div>
<div class="ab" style="left:425px;top:460px;width:967px;height:36px;background:#ffffff;border-bottom:1px solid #e4e7eb"></div>
<div class="ab" style="left:458px;top:460px;width:1px;height:36px;background:#e4e7eb"></div>
<div class="ab" style="left:562px;top:460px;width:1px;height:36px;background:#e4e7eb"></div>
<div class="ab" style="left:753px;top:460px;width:1px;height:36px;background:#e4e7eb"></div>
<div class="ab" style="left:866px;top:460px;width:1px;height:36px;background:#e4e7eb"></div>
<div class="ab" style="left:1057px;top:460px;width:1px;height:36px;background:#e4e7eb"></div>
<div class="ab" style="left:1115px;top:460px;width:1px;height:36px;background:#e4e7eb"></div>
<div class="ab" style="left:1271px;top:460px;width:1px;height:36px;background:#e4e7eb"></div>
<div class="ab" style="left:1319px;top:460px;width:1px;height:36px;background:#e4e7eb"></div>
<div class="t" style="left:425px;top:470px;width:33px;text-align:center">9</div>
<div class="t" style="left:463px;top:470px">914403001921...</div>
<div class="t" style="left:567px;top:470px">天马微电子股份有限公司</div>
<div class="t" style="left:758px;top:470px">陈宏良</div>
<div class="t" style="left:871px;top:470px">深圳市市场和质量监督管理委员...</div>
<div class="t" style="left:1062px;top:470px">1983-1...</div>
<div class="t" style="left:1120px;top:470px">制造业</div>
<div class="t" style="left:1276px;top:470px">越秀区</div>
<div class="t" style="left:1319px;top:470px;width:69px;text-align:right">113173.85</div>
<div class="ab" style="left:425px;top:496px;width:967px;height:36px;background:#eff6fe;border-bottom:1px solid #e4e7eb"></div>
<div class="ab" style="left:458px;top:496px;width:1px;height:36px;background:#e4e7eb"></div>
<div class="ab" style="left:562px;top:496px;width:1px;height:36px;background:#e4e7eb"></div>
<div class="ab" style="left:753px;top:496px;width:1px;height:36px;background:#e4e7eb"></div>
<div class="ab" style="left:866px;top:496px;width:1px;height:36px;background:#e4e7eb"></div>
<div class="ab" style="left:1057px;top:496px;width:1px;height:36px;background:#e4e7eb"></div>
<div class="ab" style="left:1115px;top:496px;width:1px;height:36px;background:#e4e7eb"></div>
<div class="ab" style="left:1271px;top:496px;width:1px;height:36px;background:#e4e7eb"></div>
<div class="ab" style="left:1319px;top:496px;width:1px;height:36px;background:#e4e7eb"></div>
<div class="t" style="left:425px;top:506px;width:33px;text-align:center">10</div>
<div class="t" style="left:463px;top:506px">914403001921...</div>
<div class="t" style="left:567px;top:506px">深圳市福田投资控股有限公司</div>
<div class="t" style="left:758px;top:506px">陈爱虹</div>
<div class="t" style="left:871px;top:506px">深圳市市场和质量监督管理委员...</div>
<div class="t" style="left:1062px;top:506px">1983-1...</div>
<div class="t" style="left:1120px;top:506px">租赁和商务服务业</div>
<div class="t" style="left:1276px;top:506px">福田区</div>
<div class="t" style="left:1319px;top:506px;width:69px;text-align:right">10500.00</div>
<div class="ab" style="left:425px;top:532px;width:967px;height:36px;background:#ffffff;border-bottom:1px solid #e4e7eb"></div>
<div class="ab" style="left:458px;top:532px;width:1px;height:36px;background:#e4e7eb"></div>
<div class="ab" style="left:562px;top:532px;width:1px;height:36px;background:#e4e7eb"></div>
<div class="ab" style="left:753px;top:532px;width:1px;height:36px;background:#e4e7eb"></div>
<div class="ab" style="left:866px;top:532px;width:1px;height:36px;background:#e4e7eb"></div>
<div class="ab" style="left:1057px;top:532px;width:1px;height:36px;background:#e4e7eb"></div>
<div class="ab" style="left:1115px;top:532px;width:1px;height:36px;background:#e4e7eb"></div>
<div class="ab" style="left:1271px;top:532px;width:1px;height:36px;background:#e4e7eb"></div>
<div class="ab" style="left:1319px;top:532px;width:1px;height:36px;background:#e4e7eb"></div>
<div class="t" style="left:425px;top:542px;width:33px;text-align:center">11</div>
<div class="t" style="left:463px;top:542px">914403001921...</div>
<div class="t" style="left:567px;top:542px">深南电路股份有限公司</div>
<div class="t" style="left:758px;top:542px">杨之诚</div>
<div class="t" style="left:871px;top:542px">深圳市市场和质量监督管理委员...</div>
<div class="t" style="left:1062px;top:542px">1984-0...</div>
<div class="t" style="left:1120px;top:542px">批发和零售业</div>
<div class="t" style="left:1276px;top:542px">龙岗区</div>
<div class="t" style="left:1319px;top:542px;width:69px;text-align:right">21000.00</div>
<div class="ab" style="left:425px;top:568px;width:967px;height:36px;background:#eff6fe;border-bottom:1px solid #e4e7eb"></div>
<div class="ab" style="left:458px;top:568px;width:1px;height:36px;background:#e4e7eb"></div>
<div class="ab" style="left:562px;top:568px;width:1px;height:36px;background:#e4e7eb"></div>
<div class="ab" style="left:753px;top:568px;width:1px;height:36px;background:#e4e7eb"></div>
<div class="ab" style="left:866px;top:568px;width:1px;height:36px;background:#e4e7eb"></div>
<div class="ab" style="left:1057px;top:568px;width:1px;height:36px;background:#e4e7eb"></div>
<div class="ab" style="left:1115px;top:568px;width:1px;height:36px;background:#e4e7eb"></div>
<div class="ab" style="left:1271px;top:568px;width:1px;height:36px;background:#e4e7eb"></div>
<div class="ab" style="left:1319px;top:568px;width:1px;height:36px;background:#e4e7eb"></div>
<div class="t" style="left:425px;top:578px;width:33px;text-align:center">12</div>
<div class="t" style="left:463px;top:578px">911100001000...</div>
<div class="t" style="left:567px;top:578px">中国建材股份有限公司</div>
<div class="t" style="left:758px;top:578px">曹江林</div>
<div class="t" style="left:871px;top:578px">北京市工商行政管理局</div>
<div class="t" style="left:1062px;top:578px">1985-0...</div>
<div class="t" style="left:1120px;top:578px">制造业</div>
<div class="t" style="left:1276px;top:578px">海淀区</div>
<div class="t" style="left:1319px;top:578px;width:69px;text-align:right">539902.63</div>
<div class="ab" style="left:425px;top:604px;width:967px;height:36px;background:#ffffff;border-bottom:1px solid #e4e7eb"></div>
<div class="ab" style="left:458px;top:604px;width:1px;height:36px;background:#e4e7eb"></div>
<div class="ab" style="left:562px;top:604px;width:1px;height:36px;background:#e4e7eb"></div>
<div class="ab" style="left:753px;top:604px;width:1px;height:36px;background:#e4e7eb"></div>
<div class="ab" style="left:866px;top:604px;width:1px;height:36px;background:#e4e7eb"></div>
<div class="ab" style="left:1057px;top:604px;width:1px;height:36px;background:#e4e7eb"></div>
<div class="ab" style="left:1115px;top:604px;width:1px;height:36px;background:#e4e7eb"></div>
<div class="ab" style="left:1271px;top:604px;width:1px;height:36px;background:#e4e7eb"></div>
<div class="ab" style="left:1319px;top:604px;width:1px;height:36px;background:#e4e7eb"></div>
<div class="t" style="left:425px;top:614px;width:33px;text-align:center">13</div>
<div class="t" style="left:463px;top:614px">911100001000...</div>
<div class="t" style="left:567px;top:614px">中国对外经济贸易信托有限公司</div>
<div class="t" style="left:758px;top:614px">杨林</div>
<div class="t" style="left:871px;top:614px">北京市工商行政管理局</div>
<div class="t" style="left:1062px;top:614px">1987-0...</div>
<div class="t" style="left:1120px;top:614px">金融业</div>
<div class="t" style="left:1276px;top:614px">西城区</div>
<div class="t" style="left:1319px;top:614px;width:69px;text-align:right">220000.00</div>
<div class="ab" style="left:425px;top:640px;width:967px;height:36px;background:#eff6fe;border-bottom:1px solid #e4e7eb"></div>
<div class="ab" style="left:458px;top:640px;width:1px;height:36px;background:#e4e7eb"></div>
<div class="ab" style="left:562px;top:640px;width:1px;height:36px;background:#e4e7eb"></div>
<div class="ab" style="left:753px;top:640px;width:1px;height:36px;background:#e4e7eb"></div>
<div class="ab" style="left:866px;top:640px;width:1px;height:36px;background:#e4e7eb"></div>
<div class="ab" style="left:1057px;top:640px;width:1px;height:36px;background:#e4e7eb"></div>
<div class="ab" style="left:1115px;top:640px;width:1px;height:36px;background:#e4e7eb"></div>
<div class="ab" style="left:1271px;top:640px;width:1px;height:36px;background:#e4e7eb"></div>
<div class="ab" style="left:1319px;top:640px;width:1px;height:36px;background:#e4e7eb"></div>
<div class="t" style="left:425px;top:650px;width:33px;text-align:center">14</div>
<div class="t" style="left:463px;top:650px">911100001347...</div>
<div class="t" style="left:567px;top:650px">中国物流股份有限公司</div>
<div class="t" style="left:758px;top:650px">梁伟华</div>
<div class="t" style="left:871px;top:650px">北京市工商行政管理局</div>
<div class="t" style="left:1062px;top:650px">1988-0...</div>
<div class="t" style="left:1120px;top:650px">交通运输、仓储和邮政业</div>
<div class="t" style="left:1276px;top:650px">西城区</div>
<div class="t" style="left:1319px;top:650px;width:69px;text-align:right">62113.86</div>
<div class="ab" style="left:425px;top:676px;width:967px;height:36px;background:#ffffff;border-bottom:1px solid #e4e7eb"></div>
<div class="ab" style="left:458px;top:676px;width:1px;height:36px;background:#e4e7eb"></div>
<div class="ab" style="left:562px;top:676px;width:1px;height:36px;background:#e4e7eb"></div>
<div class="ab" style="left:753px;top:676px;width:1px;height:36px;background:#e4e7eb"></div>
<div class="ab" style="left:866px;top:676px;width:1px;height:36px;background:#e4e7eb"></div>
<div class="ab" style="left:1057px;top:676px;width:1px;height:36px;background:#e4e7eb"></div>
<div class="ab" style="left:1115px;top:676px;width:1px;height:36px;background:#e4e7eb"></div>
<div class="ab" style="left:1271px;top:676px;width:1px;height:36px;background:#e4e7eb"></div>
<div class="ab" style="left:1319px;top:676px;width:1px;height:36px;background:#e4e7eb"></div>
<div class="t" style="left:425px;top:686px;width:33px;text-align:center">15</div>
<div class="t" style="left:463px;top:686px">913401001491...</div>
<div class="t" style="left:567px;top:686px">中科大资产经营有限责任公司</div>
<div class="t" style="left:758px;top:686px">王兵</div>
<div class="t" style="left:871px;top:686px">合肥市包河区市场监督管理局</div>
<div class="t" style="left:1062px;top:686px">1988-0...</div>
<div class="t" style="left:1120px;top:686px">租赁和商务服务业</div>
<div class="t" style="left:1276px;top:686px">包河区</div>
<div class="t" style="left:1319px;top:686px;width:69px;text-align:right">8000.00</div>
<div class="ab" style="left:425px;top:712px;width:967px;height:36px;background:#eff6fe;border-bottom:1px solid #e4e7eb"></div>
<div class="ab" style="left:458px;top:712px;width:1px;height:37px;background:#e4e7eb"></div>
<div class="ab" style="left:562px;top:712px;width:1px;height:37px;background:#e4e7eb"></div>
<div class="ab" style="left:753px;top:712px;width:1px;height:37px;background:#e4e7eb"></div>
<div class="ab" style="left:866px;top:712px;width:1px;height:37px;background:#e4e7eb"></div>
<div class="ab" style="left:1057px;top:712px;width:1px;height:37px;background:#e4e7eb"></div>
<div class="ab" style="left:1115px;top:712px;width:1px;height:37px;background:#e4e7eb"></div>
<div class="ab" style="left:1271px;top:712px;width:1px;height:37px;background:#e4e7eb"></div>
<div class="ab" style="left:1319px;top:712px;width:1px;height:37px;background:#e4e7eb"></div>
<div class="t" style="left:425px;top:722px;width:33px;text-align:center">16</div>
<div class="t" style="left:463px;top:722px">914201006164...</div>
<div class="t" style="left:567px;top:722px">长飞光纤光缆股份有限公司</div>
<div class="t" style="left:758px;top:722px">马杰</div>
<div class="t" style="left:871px;top:722px">湖北省武汉市东湖分局工商行政...</div>
<div class="t" style="left:1062px;top:722px">1988-0...</div>
<div class="t" style="left:1120px;top:722px">制造业</div>
<div class="t" style="left:1276px;top:722px">江夏区</div>
<div class="t" style="left:1319px;top:722px;width:69px;text-align:right">65133.16</div>
<div class="ab" style="left:425px;top:749px;width:967px;height:1px;background:#e8e8e8"></div>
<div class="t" style="left:600px;top:762px;color:#333">共2057条</div>
<div class="ab" style="left:667px;top:757px;width:26px;height:26px;border:1px solid #e6e6e6;background:#fff"></div>
<svg class="ab" style="left:675px;top:764px" width="10" height="12" viewBox="0 0 10 12" fill="none" stroke="#c8c8c8" stroke-width="1.1"><path d="M7 1L2.5 6L7 11"/></svg>
<div class="ab" style="left:703px;top:757px;width:26px;height:26px;background:#3f92fb;color:#fff;text-align:center;line-height:26px">1</div>
<div class="ab" style="left:735px;top:757px;width:26px;height:26px;background:#fff;border:1px solid #d0d0d0;text-align:center;line-height:24px;color:#333">2</div>
<div class="ab" style="left:768px;top:757px;width:26px;height:26px;background:#fff;border:1px solid #d0d0d0;text-align:center;line-height:24px;color:#333">3</div>
<div class="ab" style="left:800px;top:757px;width:26px;height:26px;background:#fff;border:1px solid #d0d0d0;text-align:center;line-height:24px;color:#333">4</div>
<div class="ab" style="left:833px;top:757px;width:26px;height:26px;background:#fff;border:1px solid #d0d0d0;text-align:center;line-height:24px;color:#333">5</div>
<div class="ab" style="left:865px;top:757px;width:26px;height:26px;background:#fff;border:1px solid #d0d0d0;text-align:center;line-height:24px;color:#333">6</div>
<div class="ab" style="left:898px;top:757px;width:26px;height:26px;background:#fff;border:1px solid #d0d0d0;text-align:center;line-height:24px;color:#333">7</div>
<div class="ab" style="left:930px;top:757px;width:26px;height:26px;background:#fff;border:1px solid #d0d0d0;text-align:center;line-height:24px;color:#333">8</div>
<div class="ab" style="left:963px;top:757px;width:26px;height:26px;background:#fff;border:1px solid #d0d0d0;text-align:center;line-height:24px;color:#333">9</div>
<div class="t" style="left:995px;top:763px;color:#555">...</div>
<div class="ab" style="left:1012px;top:757px;width:27px;height:26px;background:#fff;border:1px solid #d0d0d0;text-align:center;line-height:24px;color:#333">69</div>
<div class="ab" style="left:1049px;top:757px;width:26px;height:26px;border:1px solid #d0d0d0;background:#fff"></div>
<svg class="ab" style="left:1057px;top:764px" width="10" height="12" viewBox="0 0 10 12" fill="none" stroke="#444" stroke-width="1.1"><path d="M3 1L7.5 6L3 11"/></svg>
<div class="t" style="left:1101px;top:762px;color:#333">到第</div>
<div class="ab" style="left:1131px;top:759px;width:25px;height:20px;border:1px solid #d4d4d4;border-radius:3px;background:#fff;text-align:center;line-height:18px">1</div>
<div class="t" style="left:1161px;top:762px;color:#333">页</div>
<div class="t" style="left:1184px;top:762px;color:#3f8cf5">跳转</div>
<div class="ab" style="left:424px;top:135px;width:969px;height:654px;border:1px solid #1f78ff"></div>
<div class="ab" style="left:420px;top:131px;width:9px;height:9px;background:#1a7cff;border:1px solid #fff"></div>
<div class="ab" style="left:420px;top:784px;width:9px;height:9px;background:#1a7cff;border:1px solid #fff"></div>
<div class="ab" style="left:904px;top:131px;width:9px;height:9px;background:#1a7cff;border:1px solid #fff"></div>
<div class="ab" style="left:904px;top:784px;width:9px;height:9px;background:#1a7cff;border:1px solid #fff"></div>
<div class="ab" style="left:1388px;top:131px;width:9px;height:9px;background:#1a7cff;border:1px solid #fff"></div>
<div class="ab" style="left:1388px;top:784px;width:9px;height:9px;background:#1a7cff;border:1px solid #fff"></div>
<div class="ab" style="left:420px;top:457px;width:9px;height:9px;background:#1a7cff;border:1px solid #fff"></div>
<div class="ab" style="left:1388px;top:457px;width:9px;height:9px;background:#1a7cff;border:1px solid #fff"></div>
</body></html>
